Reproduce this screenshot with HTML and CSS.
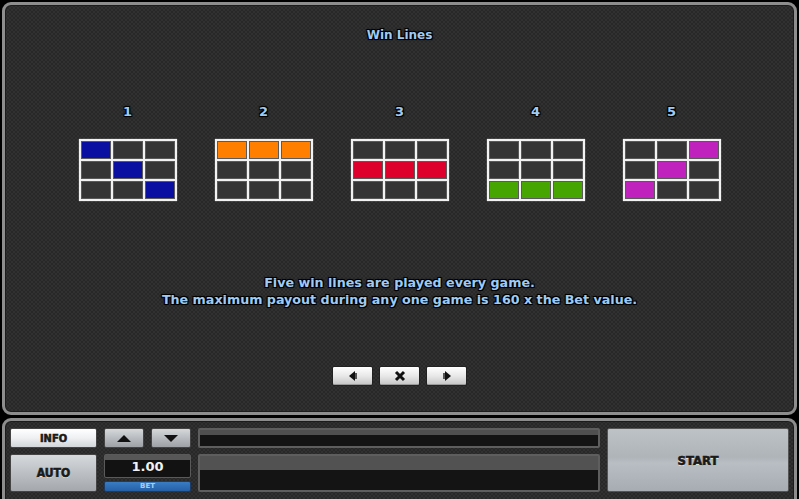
FILE: index.html
```html
<!DOCTYPE html>
<html lang="en">
<head>
  <meta charset="UTF-8" />
  <title>Win Lines</title>
  <link rel="stylesheet" href="styles.css">
</head>
<body>
  <div class="screen">
    <h1 class="title">Win Lines</h1>

    <div class="lines">
      <div class="line">
        <span class="num">1</span>
        <div class="grid">
          <i class="c blue"></i><i class="c"></i><i class="c"></i>
          <i class="c"></i><i class="c blue"></i><i class="c"></i>
          <i class="c"></i><i class="c"></i><i class="c blue"></i>
        </div>
      </div>
      <div class="line">
        <span class="num">2</span>
        <div class="grid">
          <i class="c orange"></i><i class="c orange"></i><i class="c orange"></i>
          <i class="c"></i><i class="c"></i><i class="c"></i>
          <i class="c"></i><i class="c"></i><i class="c"></i>
        </div>
      </div>
      <div class="line">
        <span class="num">3</span>
        <div class="grid">
          <i class="c"></i><i class="c"></i><i class="c"></i>
          <i class="c red"></i><i class="c red"></i><i class="c red"></i>
          <i class="c"></i><i class="c"></i><i class="c"></i>
        </div>
      </div>
      <div class="line">
        <span class="num">4</span>
        <div class="grid">
          <i class="c"></i><i class="c"></i><i class="c"></i>
          <i class="c"></i><i class="c"></i><i class="c"></i>
          <i class="c green"></i><i class="c green"></i><i class="c green"></i>
        </div>
      </div>
      <div class="line">
        <span class="num">5</span>
        <div class="grid">
          <i class="c"></i><i class="c"></i><i class="c purple"></i>
          <i class="c"></i><i class="c purple"></i><i class="c"></i>
          <i class="c purple"></i><i class="c"></i><i class="c"></i>
        </div>
      </div>
    </div>

    <p class="info-text">Five win lines are played every game.<br>The maximum payout during any one game is 160 x the Bet value.</p>

    <div class="nav">
      <button class="nav-btn"><svg width="12" height="12" viewBox="0 0 12 12"><path d="M2 6 L8 1 L8 11 Z" fill="#111"/><rect x="8" y="3" width="2" height="6" fill="#555"/></svg></button>
      <button class="nav-btn"><svg width="12" height="12" viewBox="0 0 12 12"><path d="M2 2 L10 10 M10 2 L2 10" stroke="#111" stroke-width="3"/></svg></button>
      <button class="nav-btn"><svg width="12" height="12" viewBox="0 0 12 12"><path d="M10 6 L4 1 L4 11 Z" fill="#111"/><rect x="2" y="3" width="2" height="6" fill="#555"/></svg></button>
    </div>
  </div>

  <div class="console">
    <button class="btn info-btn">INFO</button>
    <button class="btn arrow-btn up-btn"><svg width="20" height="10" viewBox="0 0 20 10"><path d="M3 9 L10 2 L17 9 Z" fill="#111"/></svg></button>
    <button class="btn arrow-btn down-btn"><svg width="20" height="10" viewBox="0 0 20 10"><path d="M3 2 L10 9 L17 2 Z" fill="#111"/></svg></button>
    <div class="bar bar-top"></div>
    <button class="btn start-btn">START</button>

    <button class="btn auto-btn">AUTO</button>
    <div class="bet">
      <div class="bet-value">1.00</div>
      <div class="bet-label">BET</div>
    </div>
    <div class="bar bar-bottom"></div>
  </div>
</body>
</html>
```

FILE: styles.css
```css
* {
  box-sizing: border-box;
}

body {
  margin: 0;
  width: 799px;
  height: 499px;
  overflow: hidden;
  background: #000;
  font-family: "DejaVu Sans", Verdana, sans-serif;
}

.screen, .console {
  background-color: #2d2d2d;
  background-image: repeating-conic-gradient(#313131 0 25%, #282828 0 50%);
  background-size: 4px 4px;
  border: 3px solid #8d8d8d;
  box-shadow: inset 0 0 0 1px #1c1c1c;
}

.screen {
  margin: 2px 2px 0 2px;
  height: 413px;
  border-radius: 9px;
  display: flex;
  flex-direction: column;
  align-items: center;
  padding-top: 22px;
}

.title, .num, .info-text {
  color: #9ecbf5;
  font-weight: bold;
  text-shadow: 1px 1px 0 #000, -1px -1px 0 #000, 1px -1px 0 #000, -1px 1px 0 #000, 0 0 3px #000;
}

.title {
  margin: 0;
  font-size: 12px;
  line-height: 16px;
}

.lines {
  display: grid;
  grid-template-columns: repeat(5, 136px);
  margin-top: 61px;
}

.line {
  display: flex;
  flex-direction: column;
  align-items: center;
}

.num {
  font-size: 13px;
  line-height: 16px;
}

.grid {
  margin-top: 19px;
  display: grid;
  grid-template-columns: repeat(3, 30px);
  grid-template-rows: repeat(3, 18px);
  gap: 2px;
  padding: 2px;
  background: #f2f2f2;
  box-shadow: 0 0 1px #bbb;
}

.c {
  background: #353535;
  box-shadow: inset 0 0 0 1px #5a5a5a;
}

.blue { background: #0a0fa2; }
.orange { background: #ff8000; }
.red { background: #de002a; }
.green { background: #46a500; }
.purple { background: #bf22bd; }

.info-text {
  margin: 73px 0 0 0;
  font-size: 12.7px;
  line-height: 17px;
  text-align: center;
}

.nav {
  display: flex;
  gap: 6px;
  margin-top: 58px;
}

.nav-btn {
  width: 41px;
  height: 20px;
  padding: 0;
  display: flex;
  align-items: center;
  justify-content: center;
  border: 1px solid #222;
  border-radius: 2px;
  background: linear-gradient(#ffffff, #e8e8e8 50%, #c4c4c4);
  box-shadow: inset 0 -1px 0 #9a9a9a;
}

.console {
  margin: 3px 2px 0 2px;
  height: 90px;
  border-radius: 9px 9px 0 0;
  padding: 7px 5px 0 5px;
  display: grid;
  grid-template-columns: 87px 40px 40px 402px 182px;
  grid-template-rows: 20px 38px;
  column-gap: 7px;
  row-gap: 6px;
}

.btn {
  padding: 0;
  border: 1px solid #444;
  border-radius: 2px;
  font-family: "DejaVu Sans Condensed", "DejaVu Sans", sans-serif;
  font-weight: bold;
  color: #1a1a1a;
  -webkit-text-stroke: 0.6px #1a1a1a;
  text-shadow: 0 1px 0 #f0f0f0;
  display: flex;
  align-items: center;
  justify-content: center;
}

.info-btn {
  grid-column: 1;
  grid-row: 1;
  font-size: 11px;
  background: linear-gradient(#ffffff, #eef0f2 50%, #d2d6da);
}

.arrow-btn {
  grid-row: 1;
  background: linear-gradient(#d6d8da, #b8bcc0 50%, #9ea2a6);
}

.up-btn { grid-column: 2; }
.down-btn { grid-column: 3; }

.auto-btn {
  grid-column: 1;
  grid-row: 2;
  font-size: 12px;
  background: linear-gradient(#d6d9dc, #bcc0c4 50%, #a4a8ac);
}

.start-btn {
  grid-column: 5;
  grid-row: 1 / span 2;
  font-size: 13px;
  background: linear-gradient(#bcc2c6, #aeb4b8 45%, #b8bec3 55%, #a6acb1);
  border-color: #555;
}

.bar {
  background: #141414;
  border: 2px solid #5e5e5e;
  border-radius: 2px;
}

.bar-top {
  grid-column: 4;
  grid-row: 1;
  background: linear-gradient(#505050 0 5px, #141414 5px);
}

.bar-bottom {
  grid-column: 4;
  grid-row: 2;
  background: linear-gradient(#525252 0 14px, #141414 14px);
}

.bet {
  grid-column: 2 / span 2;
  grid-row: 2;
  display: flex;
  flex-direction: column;
  gap: 3px;
}

.bet-value {
  height: 24px;
  border: 1px solid #5a5a5a;
  border-radius: 2px;
  background: linear-gradient(#575757 0 5px, #121212 5px);
  color: #f2f2f2;
  font-size: 13px;
  font-weight: bold;
  text-align: center;
  line-height: 24px;
}

.bet-label {
  height: 11px;
  border: 1px solid #1c3c66;
  border-radius: 2px;
  background: linear-gradient(#3a7cc4, #2460a6);
  color: #a8cdf2;
  font-size: 7px;
  font-weight: bold;
  text-align: center;
  line-height: 9px;
}
```
